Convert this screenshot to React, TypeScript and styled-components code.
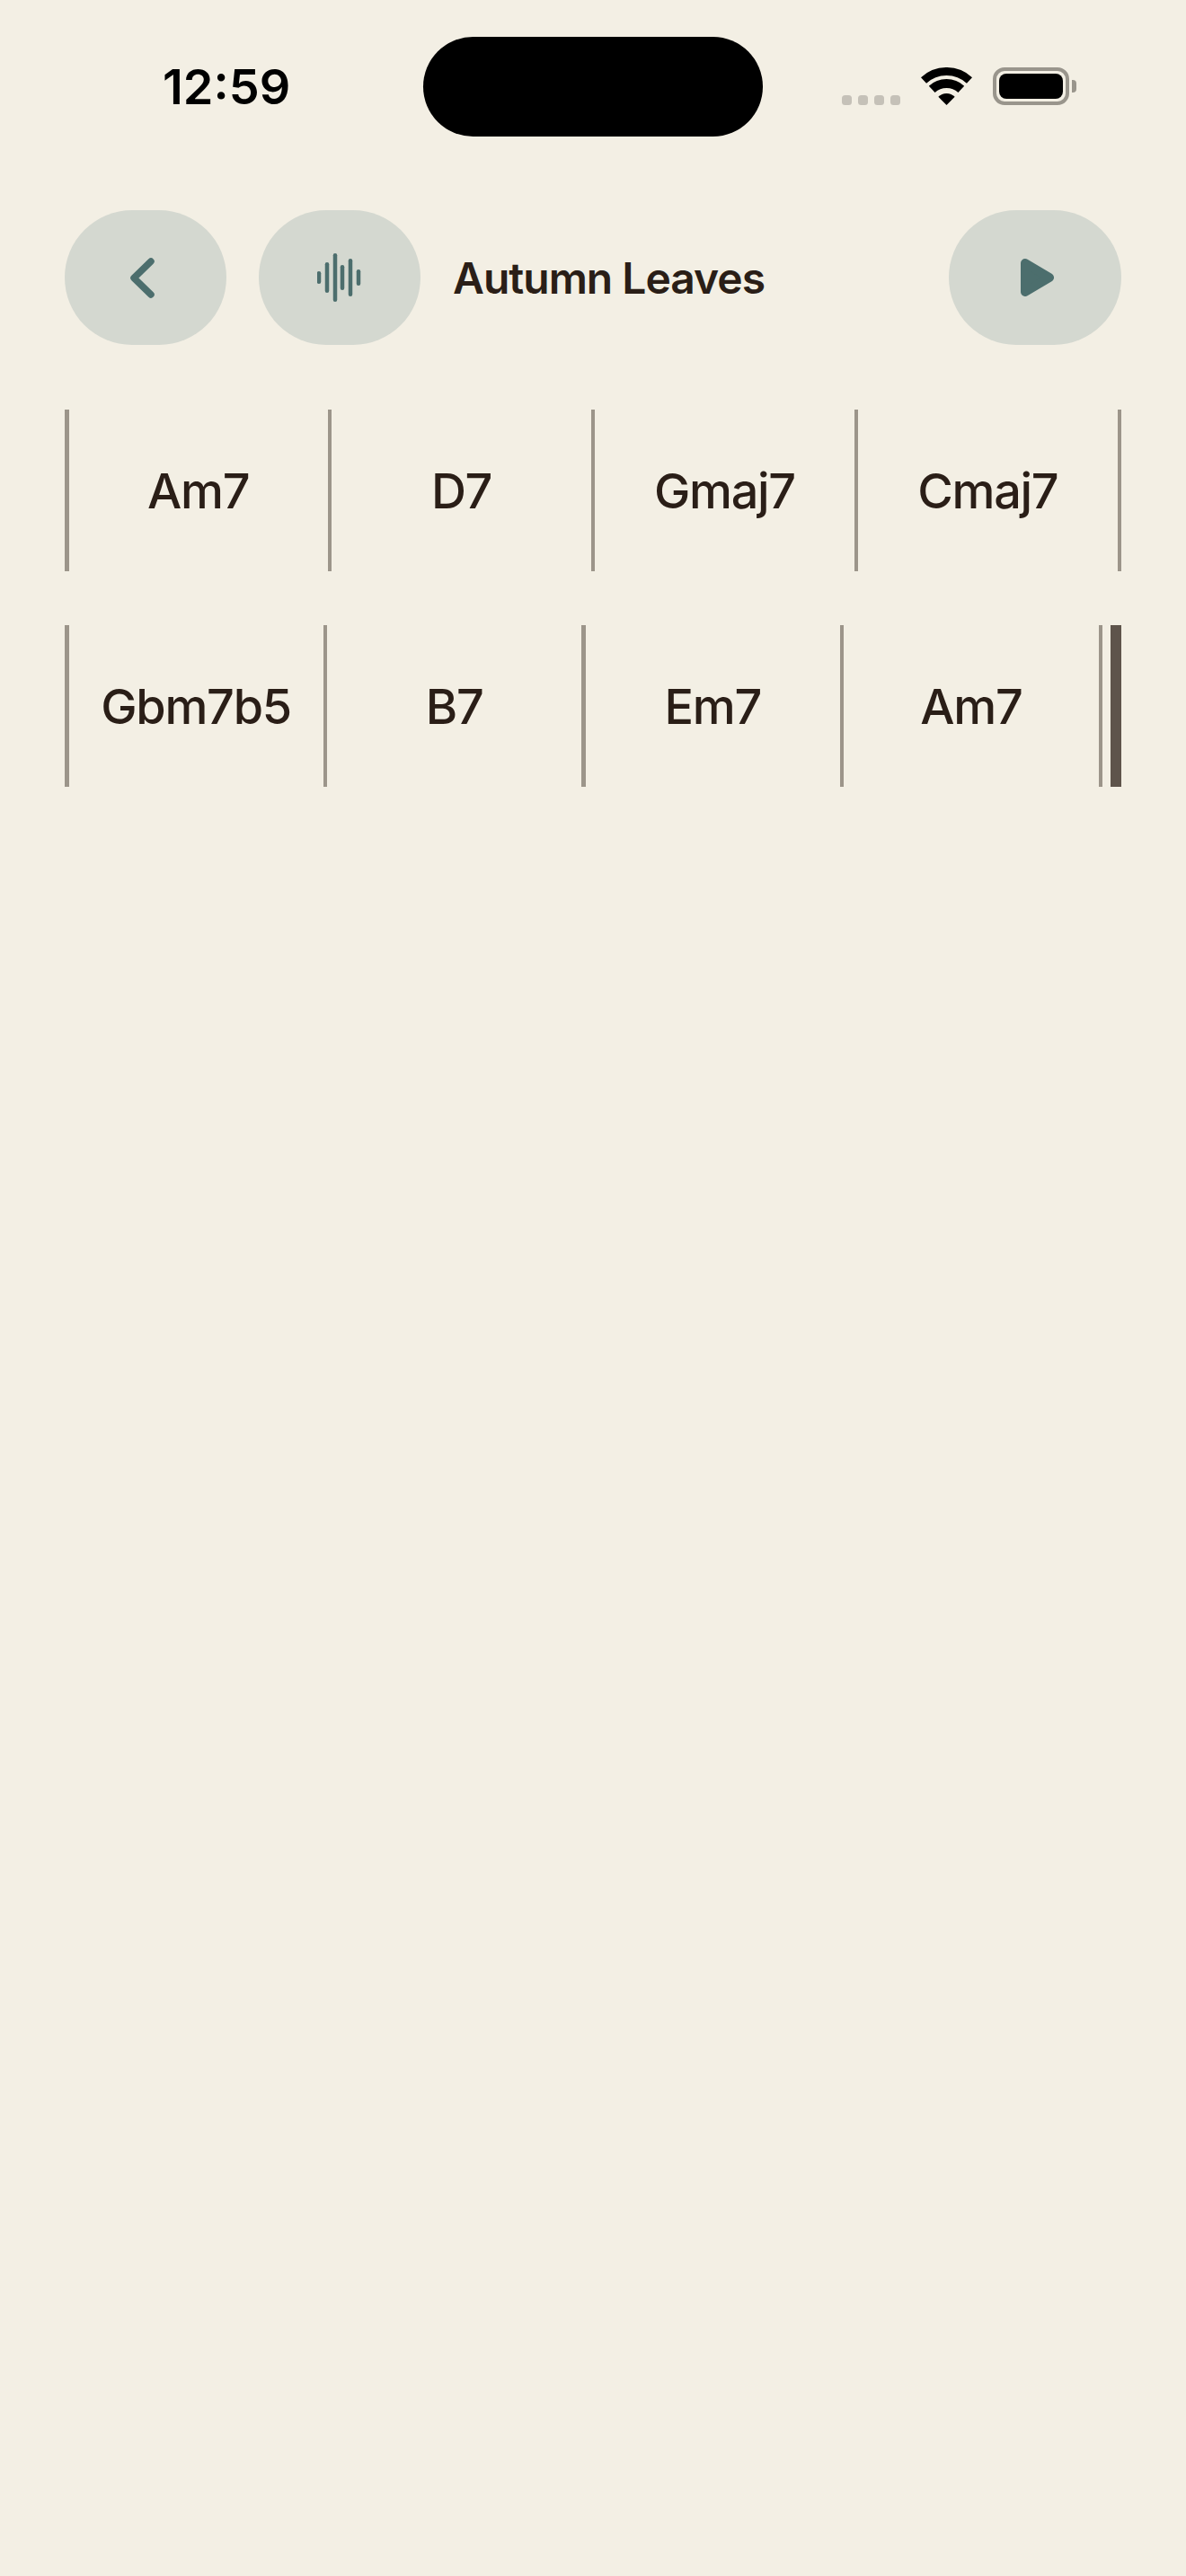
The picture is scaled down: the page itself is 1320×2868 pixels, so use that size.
import React from "react";
import styled, { createGlobalStyle } from "styled-components";

const teal = "#4c6e6d";

const GlobalStyle = createGlobalStyle`
  html, body {
    margin: 0;
    padding: 0;
    background: #f3efe4;
    font-family: Inter, "Noto Sans", sans-serif;
  }
`;

const rows = [
  { id: 1, chords: ["Am7", "D7", "Gmaj7", "Cmaj7"], final: false },
  { id: 2, chords: ["Gbm7b5", "B7", "Em7", "Am7"], final: true },
];

const waveBars = [
  { x: 2, h: 14 },
  { x: 11, h: 34 },
  { x: 20, h: 54 },
  { x: 28, h: 28 },
  { x: 37, h: 42 },
  { x: 46, h: 18 },
];

const App: React.FC = () => {
  return (
    <Page>
      <GlobalStyle />
      <StatusBar>
        <TimeSlot>
          <Time>12:59</Time>
        </TimeSlot>
        <Island />
        <Indicators>
          <Dots>
            {[0, 1, 2, 3].map((i) => (
              <Dot key={i} />
            ))}
          </Dots>
          <svg width="57" height="42" viewBox="0 0 57 42">
            <g fill="none" stroke="#000">
              <path d="M3 14.5A37.5 37.5 0 0 1 54 14.5" strokeWidth="9" />
              <path d="M12.2 24.4A24 24 0 0 1 44.8 24.4" strokeWidth="10" />
            </g>
            <path d="M28.5 42L19.3 32.8A13 13 0 0 1 37.7 32.8Z" fill="#000" />
          </svg>
          <Battery>
            <BatteryCase>
              <BatteryFill />
            </BatteryCase>
            <BatteryNub />
          </Battery>
        </Indicators>
      </StatusBar>

      <Toolbar>
        <RoundButton $width={180}>
          <svg width="34" height="45" viewBox="0 0 34 45">
            <path
              d="M23 4L4 22.5L23 41"
              fill="none"
              stroke={teal}
              strokeWidth="7.5"
              strokeLinecap="round"
              strokeLinejoin="round"
            />
          </svg>
        </RoundButton>
        <RoundButton $width={180}>
          <svg width="50" height="54" viewBox="0 0 50 54">
            {waveBars.map((bar) => (
              <rect
                key={bar.x}
                x={bar.x - 2.25}
                y={27 - bar.h / 2}
                width="4.5"
                height={bar.h}
                rx="2.25"
                fill={teal}
              />
            ))}
          </svg>
        </RoundButton>
        <Title>Autumn Leaves</Title>
        <RoundButton $width={192}>
          <svg width="42" height="42" viewBox="0 0 42 42">
            <path
              d="M10 5L37 21L10 37Z"
              fill={teal}
              stroke={teal}
              strokeWidth="10"
              strokeLinejoin="round"
            />
          </svg>
        </RoundButton>
      </Toolbar>

      <Sheet>
        {rows.map((row) => (
          <Row key={row.id}>
            {row.chords.map((chord, i) => (
              <React.Fragment key={i}>
                <ThinBar />
                <Measure>{chord}</Measure>
              </React.Fragment>
            ))}
            <ThinBar />
            {row.final && <ThickBar />}
          </Row>
        ))}
      </Sheet>
    </Page>
  );
};

const Page = styled.div`
  min-height: 2868px;
  background: #f3efe4;
  color: #2a1e17;
`;

const StatusBar = styled.div`
  display: flex;
  align-items: flex-start;
  height: 234px;
  padding-top: 41px;
  box-sizing: border-box;
`;

const TimeSlot = styled.div`
  width: 471px;
  height: 111px;
  padding-left: 181px;
  box-sizing: border-box;
  display: flex;
  align-items: center;
`;

const Time = styled.span`
  font-size: 54px;
  font-weight: 600;
  color: #000;
  line-height: 1;
`;

const Island = styled.div`
  width: 378px;
  height: 111px;
  border-radius: 56px;
  background: #000;
`;

const Indicators = styled.div`
  display: flex;
  align-items: flex-end;
  gap: 23px;
  height: 42px;
  margin-top: 34px;
  padding-left: 88px;
`;

const Dots = styled.div`
  display: flex;
  gap: 7px;
`;

const Dot = styled.div`
  width: 11px;
  height: 11px;
  border-radius: 3.5px;
  background: #c5c1b8;
`;

const Battery = styled.div`
  display: flex;
  align-items: center;
  gap: 3px;
`;

const BatteryCase = styled.div`
  width: 85px;
  height: 42px;
  padding: 3px;
  box-sizing: border-box;
  border: 4px solid #99958c;
  border-radius: 13px;
`;

const BatteryFill = styled.div`
  height: 100%;
  border-radius: 8px;
  background: #000;
`;

const BatteryNub = styled.div`
  width: 5px;
  height: 14px;
  border-radius: 0 4px 4px 0;
  background: #99958c;
`;

const Toolbar = styled.div`
  display: flex;
  align-items: center;
  gap: 36px;
  padding: 0 72px;
`;

const RoundButton = styled.button<{ $width: number }>`
  width: ${(p) => p.$width}px;
  height: 150px;
  padding: 0;
  border: 0;
  border-radius: 75px;
  background: #d4d8d0;
  display: flex;
  align-items: center;
  justify-content: center;
`;

const Title = styled.div`
  flex: 1;
  font-size: 48px;
  font-weight: 600;
  letter-spacing: -1px;
`;

const Sheet = styled.div`
  display: flex;
  flex-direction: column;
  gap: 60px;
  margin-top: 72px;
  padding: 0 72px;
`;

const Row = styled.div`
  display: flex;
  height: 180px;
`;

const Measure = styled.div`
  flex: 1;
  display: flex;
  align-items: center;
  justify-content: center;
  font-size: 54px;
  font-weight: 500;
  letter-spacing: -1.3px;
`;

const ThinBar = styled.div`
  flex: none;
  width: 4.5px;
  background: #9c958a;
`;

const ThickBar = styled.div`
  flex: none;
  width: 12px;
  margin-left: 9px;
  background: #5e544b;
`;

export default App;
